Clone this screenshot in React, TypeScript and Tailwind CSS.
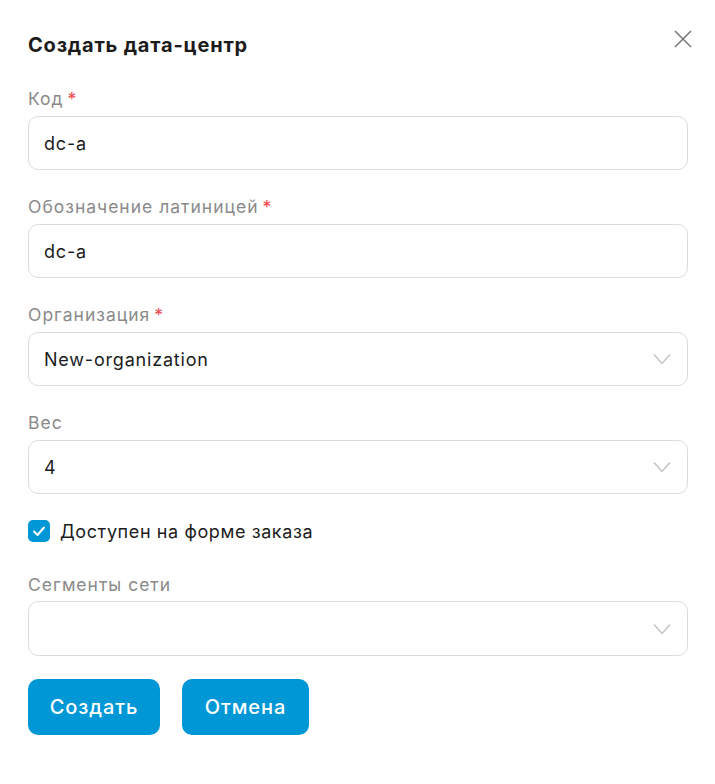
import React from "react";

const font = { fontFamily: "Inter, 'Noto Sans', sans-serif" };

function Label({ text, required }: { text: string; required?: boolean }) {
  return (
    <div className="h-[24px] text-[17.5px] leading-[24px] tracking-[1px] text-[#8a8a8a]">
      {text}
      {required && <span className="ml-[4px] text-[#f0474b]">*</span>}
    </div>
  );
}

function Chevron() {
  return (
    <svg width="18" height="12" viewBox="0 0 18 12" fill="none" className="shrink-0">
      <path d="M1 1.5 L9 10.5 L17 1.5" stroke="#c2c2c2" strokeWidth="1.4" />
    </svg>
  );
}

function Field({
  label,
  required,
  value,
  select,
  last,
}: {
  label: string;
  required?: boolean;
  value: string;
  select?: boolean;
  last?: boolean;
}) {
  return (
    <div className={last ? "" : "mb-[25px]"}>
      <Label text={label} required={required} />
      <div className="mt-[5px] flex h-[54px] items-center justify-between rounded-[10px] border border-[#dcdcdc] pl-[15px] pr-[16px] text-[18px] tracking-[0.8px] text-[#1c1c1c]">
        <span>{value}</span>
        {select && <Chevron />}
      </div>
    </div>
  );
}

export default function App() {
  return (
    <div className="min-h-[784px] w-[715px] bg-white pl-[28px] pr-[27px] pt-[31px]" style={font}>
      <div className="flex h-[28px] items-center justify-between">
        <h2 className="text-[20px] font-bold leading-[28px] tracking-[0.8px] text-[#1c1c1c]">Создать дата-центр</h2>
        <svg width="18" height="18" viewBox="0 0 18 18" className="mr-[-4px] mt-[-12px]">
          <path d="M1 1 L17 17 M17 1 L1 17" stroke="#7a7a7a" strokeWidth="1.6" />
        </svg>
      </div>

      <div className="mt-[28px]">
        <Field label="Код" required value="dc-a" />
        <Field label="Обозначение латиницей" required value="dc-a" />
        <Field label="Организация" required value="New-organization" select />
        <Field label="Вес" value="4" select last />
      </div>

      <label className="mt-[26px] flex h-[22px] items-center gap-[10px]">
        <span className="flex h-[22px] w-[22px] items-center justify-center rounded-[5px] bg-[#0097d6]">
          <svg width="14" height="12" viewBox="0 0 14 12" fill="none">
            <path d="M2 6.5 L5.5 10 L12 2.5" stroke="white" strokeWidth="2" strokeLinecap="round" strokeLinejoin="round" />
          </svg>
        </span>
        <span className="text-[18px] tracking-[0.6px] text-[#1c1c1c]">Доступен на форме заказа</span>
      </label>

      <div className="mt-[31px]">
        <Label text="Сегменты сети" />
        <div className="mt-[4px] flex h-[55px] items-center justify-end rounded-[10px] border border-[#dcdcdc] pr-[16px]">
          <Chevron />
        </div>
      </div>

      <div className="mt-[23px] flex gap-[22px]">
        <button className="h-[56px] w-[132px] rounded-[10px] bg-[#0097d6] text-[20px] font-medium tracking-[0.9px] text-white">
          Создать
        </button>
        <button className="h-[56px] w-[127px] rounded-[10px] bg-[#0097d6] text-[20px] font-medium tracking-[0.9px] text-white">
          Отмена
        </button>
      </div>
    </div>
  );
}
